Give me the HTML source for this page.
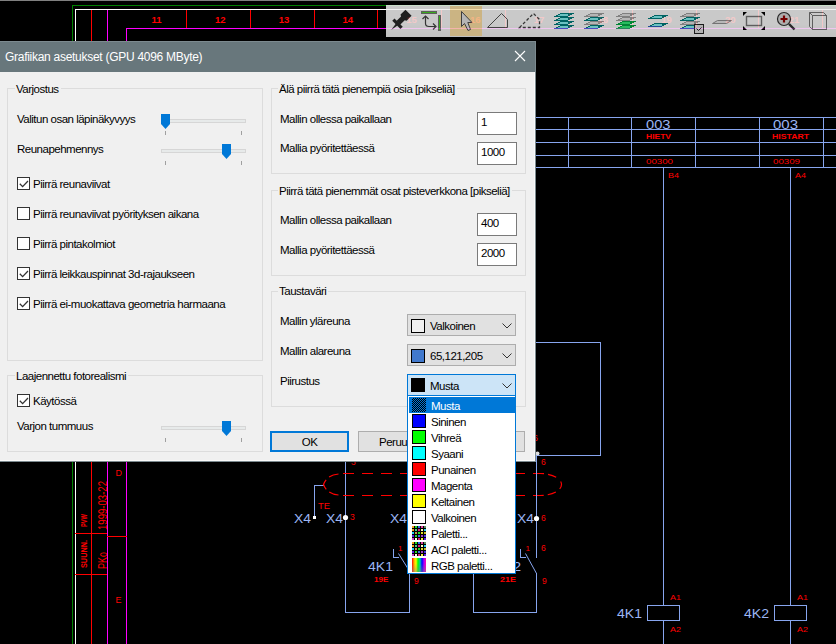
<!DOCTYPE html>
<html><head><meta charset="utf-8">
<style>
*{margin:0;padding:0;box-sizing:border-box}
html,body{width:836px;height:644px;overflow:hidden;background:#000}
body{position:relative;font-family:"Liberation Sans",sans-serif}
#cad{position:absolute;left:0;top:0}
.a{position:absolute}
.t{position:absolute;font-size:11.5px;line-height:14px;letter-spacing:-0.5px;color:#000;white-space:nowrap}
#dlg{position:absolute;left:0;top:41px;width:536px;height:421px;background:#f0f0f0;border-right:1px solid #7c8a8f;border-bottom:1px solid #7c8a8f;box-shadow:inset -1px -1px 0 #fafafa}
#title{position:absolute;left:0;top:41px;width:536px;height:31px;background:#68777c;border-top:1px solid #7c8a8f;border-right:1px solid #7c8a8f}
#title .tt{position:absolute;left:5px;top:8px;font-size:12px;line-height:15px;letter-spacing:-0.28px;color:#fff;white-space:nowrap}
.gb{position:absolute;border:1px solid #dcdcdc}
.gt{position:absolute;background:#f0f0f0;padding:0 2px 0 1px}
.cb{position:absolute;width:13px;height:13px;border:1px solid #333;background:#fff}
.track{position:absolute;height:4px;background:#e7eaea;border:1px solid #d6d6d6}
.tick{position:absolute;width:1px;height:4px;background:#a0a0a0}
.tb{position:absolute;width:40px;height:23px;border:1px solid #7a7a7a;background:#fff}
.combo{position:absolute;width:109px;height:22px;border:1px solid #adadad;background:#e1e1e1}
.sw{position:absolute;width:14px;height:14px;border:1px solid #000}
.li{position:absolute;left:0;width:107px;height:16px}
</style></head><body>
<svg id="cad" width="836" height="644" viewBox="0 0 836 644" shape-rendering="crispEdges" font-family="Liberation Sans, sans-serif"><rect x="0" y="0" width="836" height="1" fill="#808080"/><rect x="72" y="5" width="765" height="1" fill="#008000"/><rect x="72" y="5" width="1" height="640" fill="#008000"/><rect x="75" y="9" width="762" height="1" fill="#ffffff"/><rect x="75" y="9" width="1" height="636" fill="#ffffff"/><rect x="91" y="10" width="1" height="635" fill="#ff0000"/><rect x="107" y="10" width="1" height="635" fill="#ff00ff"/><rect x="126" y="28" width="711" height="1" fill="#ff00ff"/><rect x="126" y="28" width="1" height="617" fill="#ff00ff"/><rect x="186" y="10" width="1" height="18" fill="#ff0000"/><rect x="250" y="10" width="1" height="18" fill="#ff0000"/><rect x="314" y="10" width="1" height="18" fill="#ff0000"/><rect x="377" y="10" width="1" height="18" fill="#ff0000"/><rect x="441" y="10" width="1" height="18" fill="#ff0000"/><rect x="505" y="10" width="1" height="18" fill="#ff0000"/><rect x="569" y="10" width="1" height="18" fill="#ff0000"/><rect x="632" y="10" width="1" height="18" fill="#ff0000"/><rect x="696" y="10" width="1" height="18" fill="#ff0000"/><rect x="758" y="10" width="1" height="18" fill="#ff0000"/><rect x="822" y="10" width="1" height="18" fill="#ff0000"/><text x="156.5" y="23" fill="#ff0000" font-size="9.5" font-weight="bold" text-anchor="middle" >11</text><text x="220.25" y="23" fill="#ff0000" font-size="9.5" font-weight="bold" text-anchor="middle" >12</text><text x="284.0" y="23" fill="#ff0000" font-size="9.5" font-weight="bold" text-anchor="middle" >13</text><text x="347.75" y="23" fill="#ff0000" font-size="9.5" font-weight="bold" text-anchor="middle" >14</text><text x="411.5" y="23" fill="#ff0000" font-size="9.5" font-weight="bold" text-anchor="middle" >15</text><text x="475.25" y="23" fill="#ff0000" font-size="9.5" font-weight="bold" text-anchor="middle" >16</text><text x="539.0" y="23" fill="#ff0000" font-size="9.5" font-weight="bold" text-anchor="middle" >17</text><text x="602.75" y="23" fill="#ff0000" font-size="9.5" font-weight="bold" text-anchor="middle" >18</text><text x="666.5" y="23" fill="#ff0000" font-size="9.5" font-weight="bold" text-anchor="middle" >19</text><text x="730.25" y="23" fill="#ff0000" font-size="9.5" font-weight="bold" text-anchor="middle" >20</text><text x="794.0" y="23" fill="#ff0000" font-size="9.5" font-weight="bold" text-anchor="middle" >21</text><rect x="75" y="533" width="32" height="1" fill="#ff0000"/><rect x="75" y="574" width="32" height="1" fill="#ff0000"/><rect x="107" y="536" width="20" height="1" fill="#ff0000"/><text x="115.5" y="476" fill="#ff0000" font-size="9.5" textLength="6.5" lengthAdjust="spacingAndGlyphs" text-anchor="start" >D</text><text x="115.5" y="603" fill="#ff0000" font-size="9.5" textLength="6" lengthAdjust="spacingAndGlyphs" text-anchor="start" >E</text><text transform="translate(87,527) rotate(-90)" fill="#ff0000" font-size="9" font-weight="bold" textLength="13" lengthAdjust="spacingAndGlyphs">PVW</text><text transform="translate(87,568) rotate(-90)" fill="#ff0000" font-size="9" font-weight="bold" textLength="28" lengthAdjust="spacingAndGlyphs">SUUNN.</text><text transform="translate(107,530) rotate(-90)" fill="#ff0000" font-size="13.5" textLength="49" lengthAdjust="spacingAndGlyphs">1999-03-22</text><text transform="translate(107,569) rotate(-90)" fill="#ff0000" font-size="13.5" textLength="17" lengthAdjust="spacingAndGlyphs">PKo</text><rect x="536" y="117" width="301" height="1" fill="#87a5ee"/><rect x="536" y="129" width="301" height="1" fill="#87a5ee"/><rect x="536" y="142" width="301" height="1" fill="#87a5ee"/><rect x="536" y="155" width="301" height="1" fill="#87a5ee"/><rect x="536" y="167" width="301" height="1" fill="#87a5ee"/><rect x="568" y="117" width="1" height="51" fill="#87a5ee"/><rect x="631" y="117" width="1" height="51" fill="#87a5ee"/><rect x="695" y="117" width="1" height="51" fill="#87a5ee"/><rect x="759" y="117" width="1" height="51" fill="#87a5ee"/><rect x="823" y="117" width="1" height="51" fill="#87a5ee"/><text x="646" y="129" fill="#9cb6f4" font-size="12.5" textLength="24.5" lengthAdjust="spacingAndGlyphs" text-anchor="start" >003</text><text x="646" y="139" fill="#ff0000" font-size="7" font-weight="bold" textLength="25" lengthAdjust="spacingAndGlyphs" text-anchor="start" >HIETV</text><text x="646" y="164" fill="#ff0000" font-size="8" textLength="27" lengthAdjust="spacingAndGlyphs" text-anchor="start" >00300</text><text x="773" y="129" fill="#9cb6f4" font-size="12.5" textLength="25" lengthAdjust="spacingAndGlyphs" text-anchor="start" >003</text><text x="772" y="139" fill="#ff0000" font-size="7" font-weight="bold" textLength="37" lengthAdjust="spacingAndGlyphs" text-anchor="start" >HISTART</text><text x="773" y="164" fill="#ff0000" font-size="8" textLength="27" lengthAdjust="spacingAndGlyphs" text-anchor="start" >00309</text><rect x="663" y="167" width="1" height="438" fill="#87a5ee"/><rect x="663" y="621" width="1" height="24" fill="#87a5ee"/><rect x="790" y="167" width="1" height="438" fill="#87a5ee"/><rect x="790" y="621" width="1" height="24" fill="#87a5ee"/><text x="668" y="178" fill="#ff0000" font-size="8" textLength="11" lengthAdjust="spacingAndGlyphs" text-anchor="start" >B4</text><text x="795" y="178" fill="#ff0000" font-size="8" textLength="11" lengthAdjust="spacingAndGlyphs" text-anchor="start" >A4</text><rect x="300" y="342" width="301" height="1" fill="#87a5ee"/><rect x="600" y="342" width="1" height="114" fill="#87a5ee"/><rect x="536" y="455" width="65" height="1" fill="#87a5ee"/><rect x="647.5" y="605.5" width="32" height="15" fill="none" stroke="#87a5ee"/><rect x="774.5" y="605.5" width="32" height="15" fill="none" stroke="#87a5ee"/><text x="670" y="600" fill="#ff0000" font-size="8" textLength="11" lengthAdjust="spacingAndGlyphs" text-anchor="start" >A1</text><text x="670" y="632" fill="#ff0000" font-size="8" textLength="11" lengthAdjust="spacingAndGlyphs" text-anchor="start" >A2</text><text x="797" y="600" fill="#ff0000" font-size="8" textLength="11" lengthAdjust="spacingAndGlyphs" text-anchor="start" >A1</text><text x="797" y="632" fill="#ff0000" font-size="8" textLength="11" lengthAdjust="spacingAndGlyphs" text-anchor="start" >A2</text><text x="617" y="618" fill="#9cb6f4" font-size="12.5" textLength="25" lengthAdjust="spacingAndGlyphs" text-anchor="start" >4K1</text><text x="744" y="618" fill="#9cb6f4" font-size="12.5" textLength="25" lengthAdjust="spacingAndGlyphs" text-anchor="start" >4K2</text><rect x="345" y="455" width="1" height="158" fill="#87a5ee"/><rect x="345" y="612" width="65" height="1" fill="#87a5ee"/><rect x="409" y="569" width="1" height="44" fill="#87a5ee"/><rect x="393" y="549" width="1" height="9" fill="#87a5ee"/><rect x="393" y="557" width="6" height="1" fill="#87a5ee"/><line x1="398.5" y1="553.5" x2="408.5" y2="569.5" stroke="#87a5ee" shape-rendering="auto"/><text x="398" y="551" fill="#ff0000" font-size="8" text-anchor="start" >1</text><text x="368" y="571" fill="#9cb6f4" font-size="12.5" textLength="25" lengthAdjust="spacingAndGlyphs" text-anchor="start" >4K1</text><text x="374" y="582" fill="#ff0000" font-size="7" font-weight="bold" textLength="14.5" lengthAdjust="spacingAndGlyphs" text-anchor="start" >19E</text><text x="414" y="584" fill="#ff0000" font-size="8.5" text-anchor="start" >9</text><text x="294" y="523" fill="#9cb6f4" font-size="12.5" textLength="17" lengthAdjust="spacingAndGlyphs" text-anchor="start" >X4</text><text x="326" y="523" fill="#9cb6f4" font-size="12.5" textLength="17" lengthAdjust="spacingAndGlyphs" text-anchor="start" >X4</text><text x="390" y="523" fill="#9cb6f4" font-size="12.5" textLength="17" lengthAdjust="spacingAndGlyphs" text-anchor="start" >X4</text><text x="350" y="520" fill="#ff0000" font-size="8.5" text-anchor="start" >3</text><text x="351" y="465" fill="#ff0000" font-size="8.5" text-anchor="start" >3</text><rect x="314" y="485" width="10" height="1" fill="#87a5ee"/><rect x="314" y="485" width="1" height="33" fill="#87a5ee"/><rect x="313" y="516" width="3" height="3" fill="#fff"/><circle cx="345.5" cy="517.5" r="2.6" fill="#fff" shape-rendering="auto"/><text x="318" y="509" fill="#ff0000" font-size="8.5" textLength="12" lengthAdjust="spacingAndGlyphs" text-anchor="start" >TE</text><path d="M343 473.5 H540 M343 495.5 H540" fill="none" stroke="#ff0000" stroke-width="1.2" stroke-dasharray="11 8" shape-rendering="auto"/><path d="M540 473.5 A21.5 11 0 0 1 540 495.5" fill="none" stroke="#ff0000" stroke-width="1.2" stroke-dasharray="4.1 4 8.5 6.2 8.1 4.9 8.5 4 4.1 10" shape-rendering="auto"/><path d="M338.5 474 Q327 475 323.5 484.5 Q327 494 338.5 495" fill="none" stroke="#ff0000" stroke-width="1.2" stroke-dasharray="10 4 11 4 10" shape-rendering="auto"/><rect x="536" y="455" width="1" height="103" fill="#87a5ee"/><rect x="536" y="573" width="1" height="40" fill="#87a5ee"/><rect x="473" y="612" width="64" height="1" fill="#87a5ee"/><rect x="473" y="569" width="1" height="44" fill="#87a5ee"/><rect x="520" y="549" width="1" height="9" fill="#87a5ee"/><rect x="520" y="557" width="6" height="1" fill="#87a5ee"/><line x1="525.5" y1="553.5" x2="536.5" y2="573.5" stroke="#87a5ee" shape-rendering="auto"/><text x="525.5" y="551" fill="#ff0000" font-size="8" text-anchor="start" >1</text><text x="541" y="465" fill="#ff0000" font-size="8.5" text-anchor="start" >6</text><text x="541" y="521" fill="#ff0000" font-size="8.5" text-anchor="start" >6</text><text x="541" y="551" fill="#ff0000" font-size="8.5" text-anchor="start" >6</text><text x="542" y="584" fill="#ff0000" font-size="8.5" text-anchor="start" >9</text><text x="517" y="523" fill="#9cb6f4" font-size="12.5" textLength="17" lengthAdjust="spacingAndGlyphs" text-anchor="start" >X4</text><text x="496" y="571" fill="#9cb6f4" font-size="12.5" textLength="25" lengthAdjust="spacingAndGlyphs" text-anchor="start" >4K2</text><text x="500" y="582" fill="#ff0000" font-size="7" font-weight="bold" textLength="16" lengthAdjust="spacingAndGlyphs" text-anchor="start" >21E</text><circle cx="536.5" cy="518.5" r="2.6" fill="#fff" shape-rendering="auto"/><circle cx="537.5" cy="453.5" r="2" fill="#ddd" shape-rendering="auto"/><text x="533" y="441" fill="#ff0000" font-size="9" text-anchor="start" >6</text></svg>








<div id="tb" style="position:absolute;left:386px;top:5px;width:450px;height:32px;opacity:0.84;background:linear-gradient(#f0f0f0,#f0f0f0 60%,#e6e6e6)">
<svg style="position:absolute;left:0;top:0" shape-rendering="auto" width="450" height="32" viewBox="386 5 450 32"><g transform="translate(391.2,30) rotate(45)" fill="#262626"><path d="M0 0 L-1.3 -8 L1.3 -8Z"/><rect x="-5.8" y="-10.5" width="11.6" height="3.2"/><path d="M-2.6 -10 L-2.6 -16.5 L-4.3 -17.5 L-4.3 -24.5 L4.3 -24.5 L4.3 -17.5 L2.6 -16.5 L2.6 -10Z"/></g><rect x="421.5" y="11.5" width="15" height="2" fill="#44cc22" stroke="#707070"/><rect x="438.5" y="15.5" width="2" height="15" fill="#44cc22" stroke="#707070"/><path d="M425.5 17 V23.5 Q425.5 26.5 429 26.5 H435" fill="none" stroke="#404040" stroke-width="1.2"/><path d="M422.5 19 L425.5 16 L428.5 19 M433 23.5 L436 26.5 L433 29.5" fill="none" stroke="#404040" stroke-width="1.2"/><rect x="450" y="6" width="32" height="30" fill="#f2d79c"/><path d="M461.5 11.5 V26.5 L464.5 23.5 L468 30.5 L470.5 29.5 L467.8 22.5 L472 22.5Z" fill="#d8d8d8" stroke="#4a4a4a" stroke-width="1"/><path d="M487.5 27.5 L501.5 13.5 L507.5 19.5 V27.5Z" fill="none" stroke="#505050"/><path d="M519.5 27.5 L533.5 13.5 L539.5 19.5 V27.5Z" fill="none" stroke="#404040" stroke-width="1.3" stroke-dasharray="3 2"/><rect x="560" y="13" width="14" height="1" fill="#007676"/><rect x="558" y="14" width="2" height="1" fill="#007676"/><rect x="560" y="14" width="8" height="1" fill="#80e6e6"/><rect x="568" y="14" width="4" height="1" fill="#007676"/><rect x="556" y="15" width="2" height="1" fill="#007676"/><rect x="558" y="15" width="10" height="1" fill="#80e6e6"/><rect x="568" y="15" width="2" height="1" fill="#007676"/><rect x="554" y="16" width="14" height="1" fill="#007676"/><rect x="560" y="17" width="14" height="1" fill="#007676"/><rect x="558" y="18" width="2" height="1" fill="#007676"/><rect x="560" y="18" width="8" height="1" fill="#80e6e6"/><rect x="568" y="18" width="4" height="1" fill="#007676"/><rect x="556" y="19" width="2" height="1" fill="#007676"/><rect x="558" y="19" width="10" height="1" fill="#80e6e6"/><rect x="568" y="19" width="2" height="1" fill="#007676"/><rect x="554" y="20" width="14" height="1" fill="#007676"/><rect x="560" y="21" width="14" height="1" fill="#007676"/><rect x="558" y="22" width="2" height="1" fill="#007676"/><rect x="560" y="22" width="8" height="1" fill="#80e6e6"/><rect x="568" y="22" width="4" height="1" fill="#007676"/><rect x="556" y="23" width="2" height="1" fill="#007676"/><rect x="558" y="23" width="10" height="1" fill="#80e6e6"/><rect x="568" y="23" width="2" height="1" fill="#007676"/><rect x="554" y="24" width="14" height="1" fill="#007676"/><rect x="560" y="25" width="14" height="1" fill="#007676"/><rect x="558" y="26" width="2" height="1" fill="#007676"/><rect x="560" y="26" width="8" height="1" fill="#80e6e6"/><rect x="568" y="26" width="4" height="1" fill="#007676"/><rect x="556" y="27" width="2" height="1" fill="#007676"/><rect x="558" y="27" width="10" height="1" fill="#80e6e6"/><rect x="568" y="27" width="2" height="1" fill="#007676"/><rect x="554" y="28" width="14" height="1" fill="#2a5ab8"/><rect x="590" y="13" width="14" height="1" fill="#989898"/><rect x="588" y="14" width="2" height="1" fill="#989898"/><rect x="590" y="14" width="8" height="1" fill="#d8d8d8"/><rect x="598" y="14" width="4" height="1" fill="#989898"/><rect x="586" y="15" width="2" height="1" fill="#989898"/><rect x="588" y="15" width="10" height="1" fill="#d8d8d8"/><rect x="598" y="15" width="2" height="1" fill="#989898"/><rect x="584" y="16" width="14" height="1" fill="#989898"/><rect x="590" y="17" width="14" height="1" fill="#007676"/><rect x="588" y="18" width="2" height="1" fill="#007676"/><rect x="590" y="18" width="8" height="1" fill="#80e6e6"/><rect x="598" y="18" width="4" height="1" fill="#007676"/><rect x="586" y="19" width="2" height="1" fill="#007676"/><rect x="588" y="19" width="10" height="1" fill="#80e6e6"/><rect x="598" y="19" width="2" height="1" fill="#007676"/><rect x="584" y="20" width="14" height="1" fill="#007676"/><rect x="590" y="21" width="14" height="1" fill="#989898"/><rect x="588" y="22" width="2" height="1" fill="#989898"/><rect x="590" y="22" width="8" height="1" fill="#d8d8d8"/><rect x="598" y="22" width="4" height="1" fill="#989898"/><rect x="586" y="23" width="2" height="1" fill="#989898"/><rect x="588" y="23" width="10" height="1" fill="#d8d8d8"/><rect x="598" y="23" width="2" height="1" fill="#989898"/><rect x="584" y="24" width="14" height="1" fill="#989898"/><rect x="590" y="25" width="14" height="1" fill="#007676"/><rect x="588" y="26" width="2" height="1" fill="#007676"/><rect x="590" y="26" width="8" height="1" fill="#80e6e6"/><rect x="598" y="26" width="4" height="1" fill="#007676"/><rect x="586" y="27" width="2" height="1" fill="#007676"/><rect x="588" y="27" width="10" height="1" fill="#80e6e6"/><rect x="598" y="27" width="2" height="1" fill="#007676"/><rect x="584" y="28" width="14" height="1" fill="#2a5ab8"/><rect x="622" y="13" width="14" height="1" fill="#989898"/><rect x="620" y="14" width="2" height="1" fill="#989898"/><rect x="622" y="14" width="8" height="1" fill="#d8d8d8"/><rect x="630" y="14" width="4" height="1" fill="#989898"/><rect x="618" y="15" width="2" height="1" fill="#989898"/><rect x="620" y="15" width="10" height="1" fill="#d8d8d8"/><rect x="630" y="15" width="2" height="1" fill="#989898"/><rect x="616" y="16" width="14" height="1" fill="#989898"/><rect x="622" y="17" width="14" height="1" fill="#989898"/><rect x="620" y="18" width="2" height="1" fill="#989898"/><rect x="622" y="18" width="8" height="1" fill="#d8d8d8"/><rect x="630" y="18" width="4" height="1" fill="#989898"/><rect x="618" y="19" width="2" height="1" fill="#989898"/><rect x="620" y="19" width="10" height="1" fill="#d8d8d8"/><rect x="630" y="19" width="2" height="1" fill="#989898"/><rect x="616" y="20" width="14" height="1" fill="#989898"/><rect x="622" y="21" width="14" height="1" fill="#00a040"/><rect x="620" y="22" width="2" height="1" fill="#00a040"/><rect x="622" y="22" width="8" height="1" fill="#30e070"/><rect x="630" y="22" width="4" height="1" fill="#00a040"/><rect x="618" y="23" width="2" height="1" fill="#00a040"/><rect x="620" y="23" width="10" height="1" fill="#30e070"/><rect x="630" y="23" width="2" height="1" fill="#00a040"/><rect x="616" y="24" width="14" height="1" fill="#00a040"/><rect x="622" y="25" width="14" height="1" fill="#00a040"/><rect x="620" y="26" width="2" height="1" fill="#00a040"/><rect x="622" y="26" width="8" height="1" fill="#30e070"/><rect x="630" y="26" width="4" height="1" fill="#00a040"/><rect x="618" y="27" width="2" height="1" fill="#00a040"/><rect x="620" y="27" width="10" height="1" fill="#30e070"/><rect x="630" y="27" width="2" height="1" fill="#00a040"/><rect x="616" y="28" width="14" height="1" fill="#00a040"/><rect x="654" y="15" width="14" height="1" fill="#007676"/><rect x="652" y="16" width="2" height="1" fill="#007676"/><rect x="654" y="16" width="8" height="1" fill="#80e6e6"/><rect x="662" y="16" width="4" height="1" fill="#007676"/><rect x="650" y="17" width="2" height="1" fill="#007676"/><rect x="652" y="17" width="10" height="1" fill="#80e6e6"/><rect x="662" y="17" width="2" height="1" fill="#007676"/><rect x="648" y="18" width="14" height="1" fill="#007676"/><rect x="654" y="23" width="14" height="1" fill="#007676"/><rect x="652" y="24" width="2" height="1" fill="#007676"/><rect x="654" y="24" width="8" height="1" fill="#80e6e6"/><rect x="662" y="24" width="4" height="1" fill="#007676"/><rect x="650" y="25" width="2" height="1" fill="#007676"/><rect x="652" y="25" width="10" height="1" fill="#80e6e6"/><rect x="662" y="25" width="2" height="1" fill="#007676"/><rect x="648" y="26" width="14" height="1" fill="#2a5ab8"/><rect x="686" y="13" width="14" height="1" fill="#989898"/><rect x="684" y="14" width="2" height="1" fill="#989898"/><rect x="686" y="14" width="8" height="1" fill="#d8d8d8"/><rect x="694" y="14" width="4" height="1" fill="#989898"/><rect x="682" y="15" width="2" height="1" fill="#989898"/><rect x="684" y="15" width="10" height="1" fill="#d8d8d8"/><rect x="694" y="15" width="2" height="1" fill="#989898"/><rect x="680" y="16" width="14" height="1" fill="#989898"/><rect x="686" y="17" width="14" height="1" fill="#007676"/><rect x="684" y="18" width="2" height="1" fill="#007676"/><rect x="686" y="18" width="8" height="1" fill="#80e6e6"/><rect x="694" y="18" width="4" height="1" fill="#007676"/><rect x="682" y="19" width="2" height="1" fill="#007676"/><rect x="684" y="19" width="10" height="1" fill="#80e6e6"/><rect x="694" y="19" width="2" height="1" fill="#007676"/><rect x="680" y="20" width="14" height="1" fill="#007676"/><rect x="686" y="21" width="14" height="1" fill="#989898"/><rect x="684" y="22" width="2" height="1" fill="#989898"/><rect x="686" y="22" width="8" height="1" fill="#d8d8d8"/><rect x="694" y="22" width="4" height="1" fill="#989898"/><rect x="682" y="23" width="2" height="1" fill="#989898"/><rect x="684" y="23" width="10" height="1" fill="#d8d8d8"/><rect x="694" y="23" width="2" height="1" fill="#989898"/><rect x="680" y="24" width="14" height="1" fill="#989898"/><rect x="686" y="25" width="14" height="1" fill="#007676"/><rect x="684" y="26" width="2" height="1" fill="#007676"/><rect x="686" y="26" width="8" height="1" fill="#80e6e6"/><rect x="694" y="26" width="4" height="1" fill="#007676"/><rect x="682" y="27" width="2" height="1" fill="#007676"/><rect x="684" y="27" width="10" height="1" fill="#80e6e6"/><rect x="694" y="27" width="2" height="1" fill="#007676"/><rect x="680" y="28" width="14" height="1" fill="#2a5ab8"/><rect x="694.5" y="24.5" width="9" height="9" fill="#d4d4d4" stroke="#222"/><path d="M696.5 28.5 L698.5 30.5 L701.5 27.5" fill="none" stroke="#222"/><polygon points="712.5,23.5 717.5,20.5 731.5,20.5 726.5,23.5" fill="#dadada" stroke="#8a8a8a"/><rect x="746.5" y="16.5" width="15" height="9" fill="none" stroke="#707070" stroke-width="1.4"/><g fill="#000"><path d="M743 12H747L743 16Z"/><path d="M765 12H761L765 16Z"/><path d="M743 30H747L743 26Z"/><path d="M765 30H761L765 26Z"/></g><circle cx="784" cy="19" r="6.5" fill="#d0d0d0" stroke="#303030" stroke-width="1.2"/><path d="M789 24 L794.5 29.5" stroke="#303030" stroke-width="2.4"/><path d="M784 15.5V22.5M780.5 19H787.5" stroke="#8b0000" stroke-width="2.2"/><g fill="none" stroke="#707070"><rect x="812.5" y="15.5" width="14" height="14"/><path d="M809.5 12.5H823.5L826.5 15.5M809.5 12.5V26.5L812.5 29.5M809.5 12.5L812.5 15.5"/></g></svg></div>
<div id="dlg"></div>
<div id="title"><div class="tt">Grafiikan asetukset (GPU 4096 MByte)</div>
  <svg class="a" style="left:514px;top:8px" width="12" height="12" viewBox="0 0 12 12"><path d="M1 1L11 11M11 1L1 11" stroke="#fff" stroke-width="1.1" fill="none"/></svg>
</div>
<!-- group boxes -->
<div class="gb" style="left:7px;top:88px;width:256px;height:273px"></div>
<div class="gt t" style="left:15px;top:82px">Varjostus</div>
<div class="gb" style="left:7px;top:375px;width:256px;height:77px"></div>
<div class="gt t" style="left:15px;top:369px">Laajennettu fotorealismi</div>
<div class="gb" style="left:271px;top:88px;width:255px;height:86px"></div>
<div class="gt t" style="left:278px;top:82px">Älä piirrä tätä pienempiä osia [pikseliä]</div>
<div class="gb" style="left:271px;top:190px;width:255px;height:86px"></div>
<div class="gt t" style="left:278px;top:184px">Piirrä tätä pienemmät osat pisteverkkona [pikseliä]</div>
<div class="gb" style="left:271px;top:291px;width:255px;height:116px"></div>
<div class="gt t" style="left:278px;top:284px">Taustaväri</div>

<div class="t" style="left:17px;top:112px">Valitun osan läpinäkyvyys</div>
<div class="t" style="left:17px;top:142px">Reunapehmennys</div>
<div class="track" style="left:161px;top:119px;width:85px"></div>
<svg class="a" style="left:161px;top:114px" width="9" height="15"><path d="M0 0H9V10L4.5 15L0 10Z" fill="#0078d7"/></svg>
<div class="tick" style="left:165px;top:131px"></div><div class="tick" style="left:241px;top:131px"></div>
<div class="track" style="left:161px;top:149px;width:85px"></div>
<svg class="a" style="left:222px;top:144px" width="9" height="15"><path d="M0 0H9V10L4.5 15L0 10Z" fill="#0078d7"/></svg>
<div class="tick" style="left:165px;top:161px"></div><div class="tick" style="left:241px;top:161px"></div>

<div class="cb" style="left:17px;top:177px"><svg class="a" style="left:0;top:0" width="11" height="11"><path d="M1.8 5.8L4.6 8.6L10 3" stroke="#333" stroke-width="1.3" fill="none" shape-rendering="auto"/></svg></div>
<div class="t" style="left:33px;top:177px">Piirrä reunaviivat</div>
<div class="cb" style="left:17px;top:207px"></div>
<div class="t" style="left:33px;top:207px">Piirrä reunaviivat pyörityksen aikana</div>
<div class="cb" style="left:17px;top:237px"></div>
<div class="t" style="left:33px;top:237px">Piirrä pintakolmiot</div>
<div class="cb" style="left:17px;top:267px"><svg class="a" style="left:0;top:0" width="11" height="11"><path d="M1.8 5.8L4.6 8.6L10 3" stroke="#333" stroke-width="1.3" fill="none" shape-rendering="auto"/></svg></div>
<div class="t" style="left:33px;top:267px">Piirrä leikkauspinnat 3d-rajaukseen</div>
<div class="cb" style="left:17px;top:297px"><svg class="a" style="left:0;top:0" width="11" height="11"><path d="M1.8 5.8L4.6 8.6L10 3" stroke="#333" stroke-width="1.3" fill="none" shape-rendering="auto"/></svg></div>
<div class="t" style="left:33px;top:297px">Piirrä ei-muokattava geometria harmaana</div>

<div class="cb" style="left:17px;top:394px"><svg class="a" style="left:0;top:0" width="11" height="11"><path d="M1.8 5.8L4.6 8.6L10 3" stroke="#333" stroke-width="1.3" fill="none" shape-rendering="auto"/></svg></div>
<div class="t" style="left:33px;top:394px">Käytössä</div>
<div class="t" style="left:17px;top:419px">Varjon tummuus</div>
<div class="track" style="left:161px;top:426px;width:85px"></div>
<svg class="a" style="left:222px;top:421px" width="9" height="15"><path d="M0 0H9V10L4.5 15L0 10Z" fill="#0078d7"/></svg>
<div class="tick" style="left:165px;top:438px"></div><div class="tick" style="left:241px;top:438px"></div>

<div class="t" style="left:280px;top:112px">Mallin ollessa paikallaan</div>
<div class="t" style="left:280px;top:141px">Mallia pyöritettäessä</div>
<div class="tb" style="left:477px;top:112px"><div class="t" style="left:3px;top:2px">1</div></div>
<div class="tb" style="left:477px;top:142px"><div class="t" style="left:3px;top:2px">1000</div></div>
<div class="t" style="left:280px;top:213px">Mallin ollessa paikallaan</div>
<div class="t" style="left:280px;top:243px">Mallia pyöritettäessä</div>
<div class="tb" style="left:477px;top:213px"><div class="t" style="left:3px;top:2px">400</div></div>
<div class="tb" style="left:477px;top:243px"><div class="t" style="left:3px;top:2px">2000</div></div>

<div class="t" style="left:280px;top:314px">Mallin yläreuna</div>
<div class="t" style="left:280px;top:344px">Mallin alareuna</div>
<div class="t" style="left:280px;top:374px">Piirustus</div>
<div class="combo" style="left:407px;top:314px"><div class="sw" style="left:3px;top:4px;width:14px;height:14px;background:#f0f0f0"></div><div class="t" style="left:22px;top:4px">Valkoinen</div>
 <svg class="a" style="left:94px;top:8px" width="10" height="6"><path d="M0.5 0.5L5 5L9.5 0.5" stroke="#333" fill="none" shape-rendering="auto"/></svg></div>
<div class="combo" style="left:407px;top:344px"><div class="sw" style="left:3px;top:4px;background:#4179cd"></div><div class="t" style="left:22px;top:4px">65,121,205</div>
 <svg class="a" style="left:94px;top:8px" width="10" height="6"><path d="M0.5 0.5L5 5L9.5 0.5" stroke="#333" fill="none" shape-rendering="auto"/></svg></div>
<div class="combo" style="left:407px;top:374px;border-color:#0078d7;background:#cce4f7"><div class="sw" style="left:3px;top:3px;background:#000"></div><div class="t" style="left:22px;top:4px">Musta</div>
 <svg class="a" style="left:94px;top:8px" width="10" height="6"><path d="M0.5 0.5L5 5L9.5 0.5" stroke="#333" fill="none" shape-rendering="auto"/></svg></div>

<div class="a" style="left:270px;top:431px;width:79px;height:21px;border:2px solid #0078d7;background:#e1e1e1"><div class="t" style="left:0;width:75px;text-align:center;top:2px">OK</div></div>
<div class="a" style="left:358px;top:431px;width:167px;height:21px;border:1px solid #adadad;background:#e1e1e1"><div class="t" style="left:20px;top:3px">Peruuta</div></div>

<!-- dropdown list -->
<div class="a" style="left:407px;top:395px;width:109px;height:179px;border:1px solid #0078d7;background:#fff">
<div class="li" style="top:1px;left:1px;background:#0078d7"><div class="sw" style="left:3px;top:1px;border:none;background:repeating-conic-gradient(#000 0 25%,#0078d7 0 50%) 0 0/2px 2px"></div><div class="t" style="left:22px;top:2px;color:#fff">Musta</div></div>
<div class="li" style="top:17px;left:1px"><div class="sw" style="left:3px;top:1px;background:#0000ff"></div><div class="t" style="left:22px;top:2px">Sininen</div></div>
<div class="li" style="top:33px;left:1px"><div class="sw" style="left:3px;top:1px;background:#00ff00"></div><div class="t" style="left:22px;top:2px">Vihreä</div></div>
<div class="li" style="top:49px;left:1px"><div class="sw" style="left:3px;top:1px;background:#00ffff"></div><div class="t" style="left:22px;top:2px">Syaani</div></div>
<div class="li" style="top:65px;left:1px"><div class="sw" style="left:3px;top:1px;background:#ff0000"></div><div class="t" style="left:22px;top:2px">Punainen</div></div>
<div class="li" style="top:81px;left:1px"><div class="sw" style="left:3px;top:1px;background:#ff00ff"></div><div class="t" style="left:22px;top:2px">Magenta</div></div>
<div class="li" style="top:97px;left:1px"><div class="sw" style="left:3px;top:1px;background:#ffff00"></div><div class="t" style="left:22px;top:2px">Keltainen</div></div>
<div class="li" style="top:113px;left:1px"><div class="sw" style="left:3px;top:1px;background:#ffffff"></div><div class="t" style="left:22px;top:2px">Valkoinen</div></div>
<div class="li" style="top:129px;left:1px"><div class="sw" style="left:3px;top:1px;background:#000;border:none"><svg class="a" style="left:0;top:0" width="14" height="14"><rect x="0" y="0" width="2" height="2" fill="#f0a020"/><rect x="3" y="0" width="2" height="2" fill="#20e020"/><rect x="6" y="0" width="2" height="2" fill="#3070e0"/><rect x="9" y="0" width="2" height="2" fill="#e040a0"/><rect x="12" y="0" width="2" height="2" fill="#609060"/><rect x="0" y="3" width="2" height="2" fill="#f0a020"/><rect x="3" y="3" width="2" height="2" fill="#40d090"/><rect x="6" y="3" width="2" height="2" fill="#e02080"/><rect x="9" y="3" width="2" height="2" fill="#ffffc0"/><rect x="12" y="3" width="2" height="2" fill="#20d0f0"/><rect x="0" y="6" width="2" height="2" fill="#20d0f0"/><rect x="3" y="6" width="2" height="2" fill="#c0a050"/><rect x="6" y="6" width="2" height="2" fill="#20e020"/><rect x="9" y="6" width="2" height="2" fill="#e0e020"/><rect x="12" y="6" width="2" height="2" fill="#c0c030"/><rect x="0" y="9" width="2" height="2" fill="#6020e0"/><rect x="3" y="9" width="2" height="2" fill="#20e020"/><rect x="6" y="9" width="2" height="2" fill="#4070e0"/><rect x="9" y="9" width="2" height="2" fill="#a040c0"/><rect x="12" y="9" width="2" height="2" fill="#4030e0"/><rect x="0" y="12" width="2" height="2" fill="#d040d0"/><rect x="3" y="12" width="2" height="2" fill="#ffffe0"/><rect x="6" y="12" width="2" height="2" fill="#e02080"/><rect x="9" y="12" width="2" height="2" fill="#f0f040"/><rect x="12" y="12" width="2" height="2" fill="#6020e0"/></svg></div><div class="t" style="left:22px;top:2px">Paletti...</div></div>
<div class="li" style="top:145px;left:1px"><div class="sw" style="left:3px;top:1px;background:#000;border:none"><svg class="a" style="left:0;top:0" width="14" height="14"><rect x="0" y="0" width="2" height="2" fill="#f0a020"/><rect x="3" y="0" width="2" height="2" fill="#20e020"/><rect x="6" y="0" width="2" height="2" fill="#3070e0"/><rect x="9" y="0" width="2" height="2" fill="#e040a0"/><rect x="12" y="0" width="2" height="2" fill="#609060"/><rect x="0" y="3" width="2" height="2" fill="#f0a020"/><rect x="3" y="3" width="2" height="2" fill="#40d090"/><rect x="6" y="3" width="2" height="2" fill="#e02080"/><rect x="9" y="3" width="2" height="2" fill="#ffffc0"/><rect x="12" y="3" width="2" height="2" fill="#20d0f0"/><rect x="0" y="6" width="2" height="2" fill="#20d0f0"/><rect x="3" y="6" width="2" height="2" fill="#c0a050"/><rect x="6" y="6" width="2" height="2" fill="#20e020"/><rect x="9" y="6" width="2" height="2" fill="#e0e020"/><rect x="12" y="6" width="2" height="2" fill="#c0c030"/><rect x="0" y="9" width="2" height="2" fill="#6020e0"/><rect x="3" y="9" width="2" height="2" fill="#20e020"/><rect x="6" y="9" width="2" height="2" fill="#4070e0"/><rect x="9" y="9" width="2" height="2" fill="#a040c0"/><rect x="12" y="9" width="2" height="2" fill="#4030e0"/><rect x="0" y="12" width="2" height="2" fill="#d040d0"/><rect x="3" y="12" width="2" height="2" fill="#ffffe0"/><rect x="6" y="12" width="2" height="2" fill="#e02080"/><rect x="9" y="12" width="2" height="2" fill="#f0f040"/><rect x="12" y="12" width="2" height="2" fill="#6020e0"/></svg></div><div class="t" style="left:22px;top:2px">ACI paletti...</div></div>
<div class="li" style="top:161px;left:1px"><div class="sw" style="left:3px;top:1px;border:none;background:linear-gradient(rgba(128,128,128,0) 40%,rgba(128,128,128,.45)),linear-gradient(90deg,#f00,#fa0,#ff0,#0f0,#0ca,#00f,#a0f,#f0a)"></div><div class="t" style="left:22px;top:2px">RGB paletti...</div></div>
</div>


</body></html>
